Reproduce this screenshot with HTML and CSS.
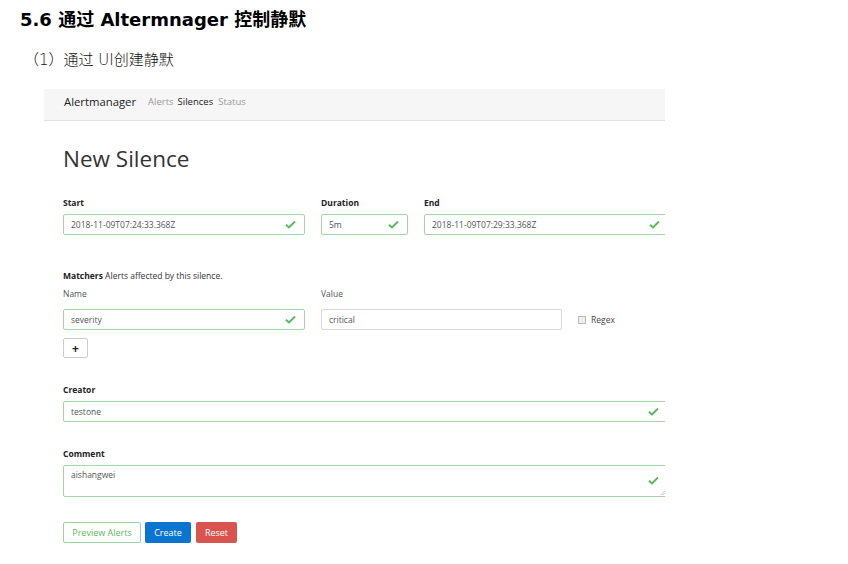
FILE: index.html
```html
<!DOCTYPE html>
<html>
<head>
<meta charset="utf-8">
<link rel="stylesheet" href="styles.css">
</head>
<body>
<h1 class="doc-title">5.6 通过 Altermnager 控制静默</h1>
<p class="doc-sub">（1）通过 UI创建静默</p>
<div class="shot">
  <div class="nav">
    <span class="brand">Alertmanager</span>
    <span class="link">Alerts</span>
    <span class="link active">Silences</span>
    <span class="link">Status</span>
  </div>
  <div class="content">
    <h2 class="title">New Silence</h2>
    <div class="row r1">
      <div class="field w-start">
        <div class="label">Start</div>
        <div class="input valid"><span>2018-11-09T07:24:33.368Z</span><svg class="check" viewBox="0 0 12 10"><path d="M1 5.2 L4.3 8.3 L11 1.6" fill="none" stroke="#5cb85c" stroke-width="2.2"/></svg></div>
      </div>
      <div class="field w-dur">
        <div class="label">Duration</div>
        <div class="input valid"><span>5m</span><svg class="check" viewBox="0 0 12 10"><path d="M1 5.2 L4.3 8.3 L11 1.6" fill="none" stroke="#5cb85c" stroke-width="2.2"/></svg></div>
      </div>
      <div class="field w-end">
        <div class="label">End</div>
        <div class="input valid"><span>2018-11-09T07:29:33.368Z</span><svg class="check" viewBox="0 0 12 10"><path d="M1 5.2 L4.3 8.3 L11 1.6" fill="none" stroke="#5cb85c" stroke-width="2.2"/></svg></div>
      </div>
    </div>
    <div class="matchers"><b>Matchers</b> Alerts affected by this silence.</div>
    <div class="row r2">
      <div class="field w-start">
        <div class="label light">Name</div>
        <div class="input valid"><span>severity</span><svg class="check" viewBox="0 0 12 10"><path d="M1 5.2 L4.3 8.3 L11 1.6" fill="none" stroke="#5cb85c" stroke-width="2.2"/></svg></div>
      </div>
      <div class="field w-val">
        <div class="label light">Value</div>
        <div class="input"><span>critical</span></div>
      </div>
      <div class="regex"><span class="box"></span>Regex</div>
    </div>
    <div class="plus">+</div>
    <div class="label mt-creator">Creator</div>
    <div class="input valid wide"><span>testone</span><svg class="check" viewBox="0 0 12 10"><path d="M1 5.2 L4.3 8.3 L11 1.6" fill="none" stroke="#5cb85c" stroke-width="2.2"/></svg></div>
    <div class="label mt-comment">Comment</div>
    <div class="input valid wide textarea"><span>aishangwei</span><svg class="check" viewBox="0 0 12 10"><path d="M1 5.2 L4.3 8.3 L11 1.6" fill="none" stroke="#5cb85c" stroke-width="2.2"/></svg><svg class="grip" viewBox="0 0 6 6"><path d="M1 6 L6 1 M3.5 6 L6 3.5" stroke="#aaa" stroke-width="0.8"/></svg></div>
    <div class="buttons">
      <span class="btn preview">Preview Alerts</span>
      <span class="btn create">Create</span>
      <span class="btn reset">Reset</span>
    </div>
  </div>
</div>
</body>
</html>
```
FILE: styles.css
```css
html, body { margin: 0; padding: 0; background: #fff; }
body { font-family: "Open Sans", "Noto Sans CJK SC", sans-serif; color: #333; }

.doc-title {
  margin: 0;
  padding: 10px 0 0 20px;
  font-family: "DejaVu Sans", "Noto Sans CJK SC", sans-serif;
  font-weight: bold;
  font-size: 18px;
  line-height: 20px;
  color: #000;
}
.doc-sub {
  margin: 0;
  padding: 20px 0 0 24px;
  font-family: "DejaVu Sans", "Noto Sans CJK SC", sans-serif;
  font-size: 15px;
  font-weight: 300;
  line-height: 20px;
  color: #111;
}

.shot {
  margin: 19px 0 0 44px;
  width: 621px;
  height: 470px;
  overflow: hidden;
  font-family: "Open Sans", sans-serif;
}
.nav {
  box-sizing: border-box;
  height: 32px;
  background: #f6f6f6;
  border-bottom: 1px solid #e2e2e2;
  display: flex;
  align-items: center;
  padding: 0 0 6px 20px;
  font-size: 9.5px;
}
.brand { font-size: 11.3px; color: #222; margin-right: 12px; }
.link { color: #999; margin-right: 4px; }
.link.active { color: #222; margin-right: 5px; }

.content { padding-left: 19px; width: 640px; }
.title {
  margin: 23px 0 0 0;
  font-weight: normal;
  font-size: 22.5px;
  line-height: 30px;
  color: #333;
}
.row { display: flex; gap: 16px; }
.r1 { margin-top: 23px; }
.field { display: flex; flex-direction: column; }
.w-start { width: 242px; }
.w-dur { width: 87px; }
.w-end { width: 245px; }
.w-val { width: 241px; }
.label { font-size: 8.5px; font-weight: bold; line-height: 12px; color: #222; height: 12px; }
.label.light { font-weight: normal; color: #555; }
.r1 .label { margin-bottom: 5px; }
.r2 .label { margin-bottom: 9px; }

.input {
  box-sizing: border-box;
  height: 21px;
  border: 1px solid #d9d9d9;
  border-radius: 2px;
  display: flex;
  align-items: center;
  padding: 0 8px 0 7px;
  font-size: 8.5px;
  color: #555;
  background: #fff;
}
.input span { flex: 1; }
.input.valid { border-color: #a6d4a6; }
.check { width: 11px; height: 9px; }

.matchers { margin-top: 35px; font-size: 8.5px; line-height: 12px; color: #333; }
.matchers b { color: #222; }
.r2 { margin-top: 6px; align-items: flex-start; }
.regex {
  margin: 26px 0 0 0;
  display: flex;
  align-items: center;
  font-size: 8.5px;
  color: #444;
}
.box {
  width: 6px; height: 6px;
  border: 1px solid #bbb;
  background: #eee;
  margin-right: 5px;
}
.plus {
  box-sizing: border-box;
  margin-top: 8px;
  width: 25px;
  height: 20px;
  border: 1px solid #ccc;
  border-radius: 2px;
  display: flex;
  align-items: center;
  justify-content: center;
  font-weight: bold;
  font-size: 12px;
  color: #222;
}
.mt-creator { margin-top: 26px; margin-bottom: 5px; }
.mt-comment { margin-top: 26px; margin-bottom: 5px; }
.wide { width: 605px; }
.textarea {
  height: 32px;
  align-items: flex-start;
  padding-top: 3px;
  position: relative;
}
.textarea .check { margin-top: 7px; }
.grip { position: absolute; right: 2px; bottom: 1px; width: 5px; height: 5px; }

.buttons { margin-top: 25px; display: flex; gap: 4px; }
.btn {
  box-sizing: border-box;
  height: 21px;
  display: flex;
  align-items: center;
  justify-content: center;
  border-radius: 2px;
  font-size: 9px;
  white-space: nowrap;
}
.preview { border: 1px solid #9fd09f; color: #5cb85c; width: 78px; }
.create { background: #0b74d1; color: #fff; width: 46px; }
.reset { background: #d9534f; color: #fff; width: 41px; margin-left: 1px; }
```
